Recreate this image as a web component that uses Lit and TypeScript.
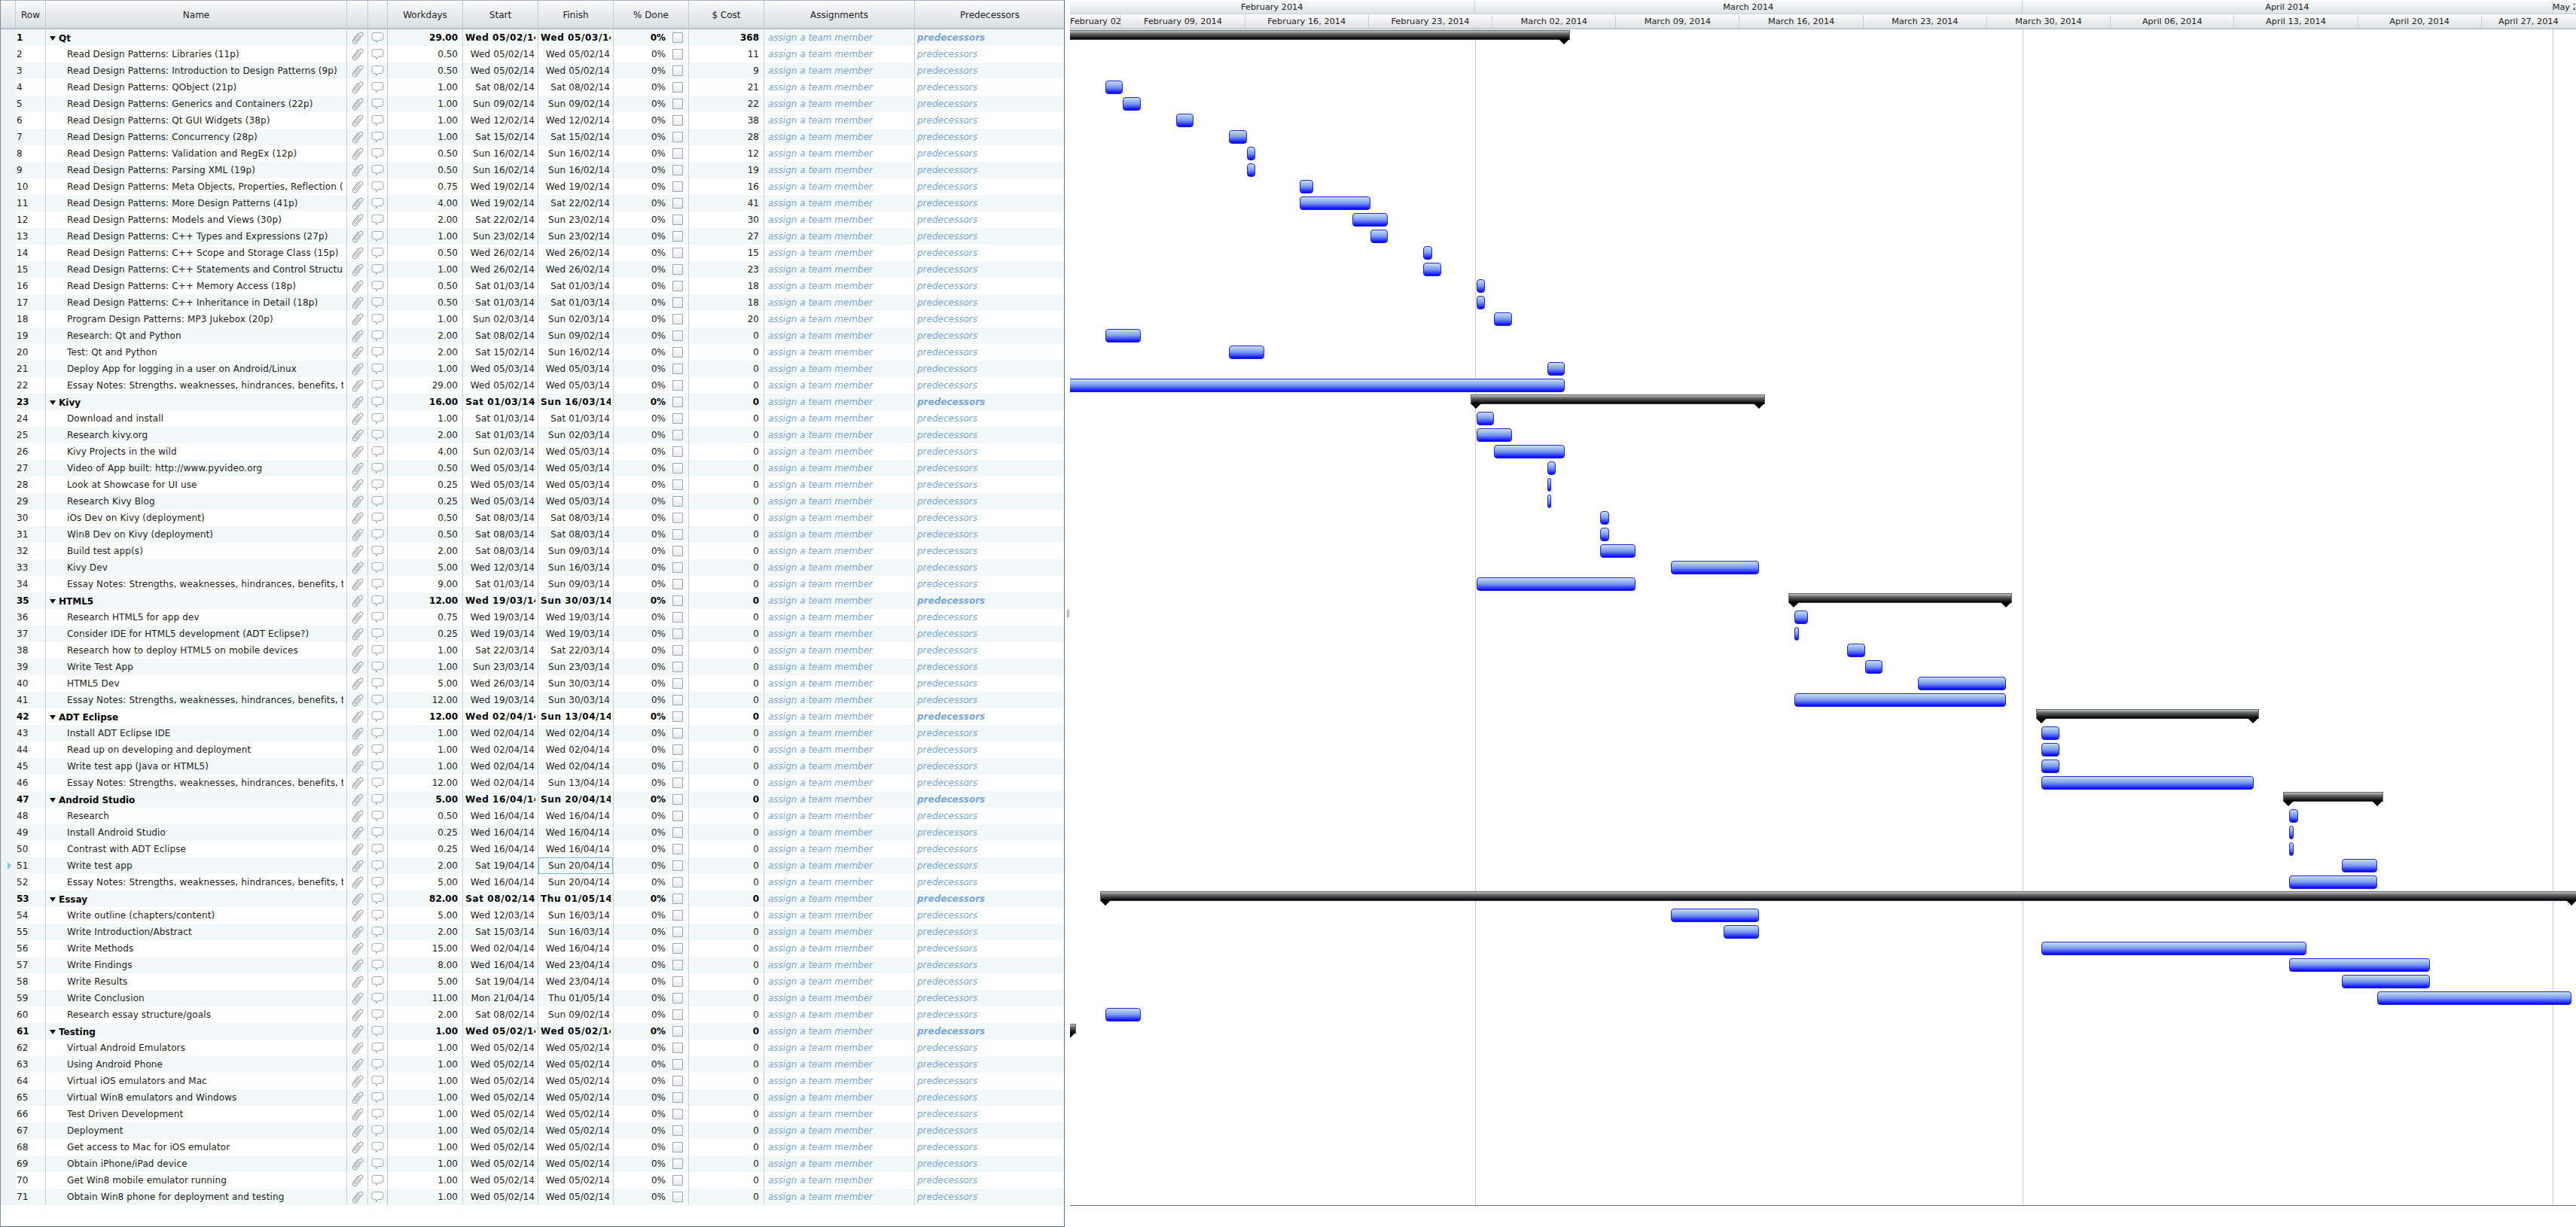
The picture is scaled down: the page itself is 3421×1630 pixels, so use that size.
import { LitElement, html, css, svg } from 'lit';
import { customElement } from 'lit/decorators.js';
import { classMap } from 'lit/directives/class-map.js';

type Task = [name: string, days: number, start: string, finish: string, cost: number, group?: boolean];

const ESSAY = 'Essay Notes: Strengths, weaknesses, hindrances, benefits, threats';
const RDP = 'Read Design Patterns: ';

const TASKS: Task[] = [
  ['Qt', 29, 'Wed 05/02/14', 'Wed 05/03/14', 368, true],
  [RDP + 'Libraries (11p)', 0.5, 'Wed 05/02/14', 'Wed 05/02/14', 11],
  [RDP + 'Introduction to Design Patterns (9p)', 0.5, 'Wed 05/02/14', 'Wed 05/02/14', 9],
  [RDP + 'QObject (21p)', 1, 'Sat 08/02/14', 'Sat 08/02/14', 21],
  [RDP + 'Generics and Containers (22p)', 1, 'Sun 09/02/14', 'Sun 09/02/14', 22],
  [RDP + 'Qt GUI Widgets (38p)', 1, 'Wed 12/02/14', 'Wed 12/02/14', 38],
  [RDP + 'Concurrency (28p)', 1, 'Sat 15/02/14', 'Sat 15/02/14', 28],
  [RDP + 'Validation and RegEx (12p)', 0.5, 'Sun 16/02/14', 'Sun 16/02/14', 12],
  [RDP + 'Parsing XML (19p)', 0.5, 'Sun 16/02/14', 'Sun 16/02/14', 19],
  [RDP + 'Meta Objects, Properties, Reflection (16p)', 0.75, 'Wed 19/02/14', 'Wed 19/02/14', 16],
  [RDP + 'More Design Patterns (41p)', 4, 'Wed 19/02/14', 'Sat 22/02/14', 41],
  [RDP + 'Models and Views (30p)', 2, 'Sat 22/02/14', 'Sun 23/02/14', 30],
  [RDP + 'C++ Types and Expressions (27p)', 1, 'Sun 23/02/14', 'Sun 23/02/14', 27],
  [RDP + 'C++ Scope and Storage Class (15p)', 0.5, 'Wed 26/02/14', 'Wed 26/02/14', 15],
  [RDP + 'C++ Statements and Control Structures (23p)', 1, 'Wed 26/02/14', 'Wed 26/02/14', 23],
  [RDP + 'C++ Memory Access (18p)', 0.5, 'Sat 01/03/14', 'Sat 01/03/14', 18],
  [RDP + 'C++ Inheritance in Detail (18p)', 0.5, 'Sat 01/03/14', 'Sat 01/03/14', 18],
  ['Program Design Patterns: MP3 Jukebox (20p)', 1, 'Sun 02/03/14', 'Sun 02/03/14', 20],
  ['Research: Qt and Python', 2, 'Sat 08/02/14', 'Sun 09/02/14', 0],
  ['Test: Qt and Python', 2, 'Sat 15/02/14', 'Sun 16/02/14', 0],
  ['Deploy App for logging in a user on Android/Linux', 1, 'Wed 05/03/14', 'Wed 05/03/14', 0],
  [ESSAY, 29, 'Wed 05/02/14', 'Wed 05/03/14', 0],
  ['Kivy', 16, 'Sat 01/03/14', 'Sun 16/03/14', 0, true],
  ['Download and install', 1, 'Sat 01/03/14', 'Sat 01/03/14', 0],
  ['Research kivy.org', 2, 'Sat 01/03/14', 'Sun 02/03/14', 0],
  ['Kivy Projects in the wild', 4, 'Sun 02/03/14', 'Wed 05/03/14', 0],
  ['Video of App built: http://www.pyvideo.org', 0.5, 'Wed 05/03/14', 'Wed 05/03/14', 0],
  ['Look at Showcase for UI use', 0.25, 'Wed 05/03/14', 'Wed 05/03/14', 0],
  ['Research Kivy Blog', 0.25, 'Wed 05/03/14', 'Wed 05/03/14', 0],
  ['iOs Dev on Kivy (deployment)', 0.5, 'Sat 08/03/14', 'Sat 08/03/14', 0],
  ['Win8 Dev on Kivy (deployment)', 0.5, 'Sat 08/03/14', 'Sat 08/03/14', 0],
  ['Build test app(s)', 2, 'Sat 08/03/14', 'Sun 09/03/14', 0],
  ['Kivy Dev', 5, 'Wed 12/03/14', 'Sun 16/03/14', 0],
  [ESSAY, 9, 'Sat 01/03/14', 'Sun 09/03/14', 0],
  ['HTML5', 12, 'Wed 19/03/14', 'Sun 30/03/14', 0, true],
  ['Research HTML5 for app dev', 0.75, 'Wed 19/03/14', 'Wed 19/03/14', 0],
  ['Consider IDE for HTML5 development (ADT Eclipse?)', 0.25, 'Wed 19/03/14', 'Wed 19/03/14', 0],
  ['Research how to deploy HTML5 on mobile devices', 1, 'Sat 22/03/14', 'Sat 22/03/14', 0],
  ['Write Test App', 1, 'Sun 23/03/14', 'Sun 23/03/14', 0],
  ['HTML5 Dev', 5, 'Wed 26/03/14', 'Sun 30/03/14', 0],
  [ESSAY, 12, 'Wed 19/03/14', 'Sun 30/03/14', 0],
  ['ADT Eclipse', 12, 'Wed 02/04/14', 'Sun 13/04/14', 0, true],
  ['Install ADT Eclipse IDE', 1, 'Wed 02/04/14', 'Wed 02/04/14', 0],
  ['Read up on developing and deployment', 1, 'Wed 02/04/14', 'Wed 02/04/14', 0],
  ['Write test app (Java or HTML5)', 1, 'Wed 02/04/14', 'Wed 02/04/14', 0],
  [ESSAY, 12, 'Wed 02/04/14', 'Sun 13/04/14', 0],
  ['Android Studio', 5, 'Wed 16/04/14', 'Sun 20/04/14', 0, true],
  ['Research', 0.5, 'Wed 16/04/14', 'Wed 16/04/14', 0],
  ['Install Android Studio', 0.25, 'Wed 16/04/14', 'Wed 16/04/14', 0],
  ['Contrast with ADT Eclipse', 0.25, 'Wed 16/04/14', 'Wed 16/04/14', 0],
  ['Write test app', 2, 'Sat 19/04/14', 'Sun 20/04/14', 0],
  [ESSAY, 5, 'Wed 16/04/14', 'Sun 20/04/14', 0],
  ['Essay', 82, 'Sat 08/02/14', 'Thu 01/05/14', 0, true],
  ['Write outline (chapters/content)', 5, 'Wed 12/03/14', 'Sun 16/03/14', 0],
  ['Write Introduction/Abstract', 2, 'Sat 15/03/14', 'Sun 16/03/14', 0],
  ['Write Methods', 15, 'Wed 02/04/14', 'Wed 16/04/14', 0],
  ['Write Findings', 8, 'Wed 16/04/14', 'Wed 23/04/14', 0],
  ['Write Results', 5, 'Sat 19/04/14', 'Wed 23/04/14', 0],
  ['Write Conclusion', 11, 'Mon 21/04/14', 'Thu 01/05/14', 0],
  ['Research essay structure/goals', 2, 'Sat 08/02/14', 'Sun 09/02/14', 0],
  ['Testing', 1, 'Wed 05/02/14', 'Wed 05/02/14', 0, true],
  ['Virtual Android Emulators', 1, 'Wed 05/02/14', 'Wed 05/02/14', 0],
  ['Using Android Phone', 1, 'Wed 05/02/14', 'Wed 05/02/14', 0],
  ['Virtual iOS emulators and Mac', 1, 'Wed 05/02/14', 'Wed 05/02/14', 0],
  ['Virtual Win8 emulators and Windows', 1, 'Wed 05/02/14', 'Wed 05/02/14', 0],
  ['Test Driven Development', 1, 'Wed 05/02/14', 'Wed 05/02/14', 0],
  ['Deployment', 1, 'Wed 05/02/14', 'Wed 05/02/14', 0],
  ['Get access to Mac for iOS emulator', 1, 'Wed 05/02/14', 'Wed 05/02/14', 0],
  ['Obtain iPhone/iPad device', 1, 'Wed 05/02/14', 'Wed 05/02/14', 0],
  ['Get Win8 mobile emulator running', 1, 'Wed 05/02/14', 'Wed 05/02/14', 0],
  ['Obtain Win8 phone for deployment and testing', 1, 'Wed 05/02/14', 'Wed 05/02/14', 0],
];

// timeline scale, measured from the chart: px per day and where 8 Feb falls
const DAY = 23.46;
const GANTT_X = 1422;
const GANTT_END = 3421;
const FEB8_X = 1469;
const FEB9_TICK = 1490.4;
const CUM_DAYS: Record<string, number> = { '02': 0, '03': 28, '04': 59, '05': 89 };

const dayOffset = (date: string) => {
  const [d, m] = date.slice(4).split('/');
  return CUM_DAYS[m] + Number(d) - 8;
};
const barX = (day: number) => FEB8_X + day * DAY - GANTT_X;

const tick = (daysFromFeb9: number) => FEB9_TICK + daysFromFeb9 * DAY - GANTT_X;

const MONTHS: [string, number, number][] = [
  ['February 2014', 0, tick(20)],
  ['March 2014', tick(20), tick(51)],
  ['April 2014', tick(51), tick(81)],
  ['May 2014', tick(81), GANTT_END - GANTT_X],
];

const WEEK_LABELS = [
  'February 02, 2014', 'February 09, 2014', 'February 16, 2014', 'February 23, 2014',
  'March 02, 2014', 'March 09, 2014', 'March 16, 2014', 'March 23, 2014', 'March 30, 2014',
  'April 06, 2014', 'April 13, 2014', 'April 20, 2014', 'April 27, 2014',
];

const clipIcon = svg`<svg class="icon" width="20" height="20" viewBox="0 0 20 20" fill="none">
  <g transform="rotate(38 10 10)" stroke-linecap="round">
    <path d="M7 5v11a3 3 0 0 0 6 0V3.500a2.200 2.200 0 0 0-4.400 0V14.500a1.300 1.300 0 0 0 2.600 0V6" stroke="#a3a7aa" stroke-width="1.100"/>
  </g>
</svg>`;

const noteIcon = svg`<svg class="icon" width="17" height="17" viewBox="0 0 17 17" fill="none">
  <path d="M3.500 1.500h10a2.500 2.500 0 0 1 2.500 2.500v5a2.500 2.500 0 0 1-2.500 2.500H8.500L6.500 15v-3.500h-3A2.500 2.500 0 0 1 1 9V4a2.500 2.500 0 0 1 2.500-2.500z" fill="#fff" stroke="#a6aaad"/>
  <path d="M14.500 5v4a1.200 1.200 0 0 1-1.200 1.200H7.500c4 0 6.500-1.500 7-5.200z" fill="#e2e4e5"/>
</svg>`;

@customElement('app-root')
export class AppRoot extends LitElement {
  static styles = css`
    :host {
      display: flex;
      width: 3421px;
      height: 1630px;
      overflow: hidden;
      background: #fff;
      font-family: "DejaVu Sans", Verdana, sans-serif;
      font-size: 12px;
      color: #1c1c1c;
    }

    /* left table */
    .grid {
      box-sizing: border-box;
      width: 1414px;
      height: 1630px;
      flex: none;
      border-left: 1px solid #7d8e9b;
      border-right: 1px solid #5f7482;
      border-bottom: 1px solid #5f7482;
    }

    .grid-head {
      display: flex;
      box-sizing: border-box;
      height: 39px;
      padding-top: 0;
      border-top: 1px solid #a5b4c4;
      border-bottom: 2px solid #b4c0c9;
      background: linear-gradient(#f9fafa, #d9dfe3);
    }

    .grid-head .cell {
      justify-content: center;
      padding: 1px 0 0;
      letter-spacing: 0;
      border-right-color: #c3cacf;
    }

    .row {
      display: flex;
      height: 22px;
    }

    .row.odd {
      background: #f3f8f9;
    }

    .row.group {
      font-weight: bold;
      color: #000;
    }

    .cell {
      display: flex;
      align-items: center;
      box-sizing: border-box;
      flex: none;
      height: 100%;
      min-width: 0;
      border-right: 1px solid #c9d1d6;
    }

    .t {
      flex: 1;
      min-width: 0;
      overflow: hidden;
      white-space: nowrap;
    }

    .gutter { width: 20px; padding-left: 9px; background: #edf3f7; border-right: 0; }
    .grid-head .gutter { background: none; border-right: 1px solid #c3cacf; }
    .c-row { width: 40px; padding-left: 1px; }
    .c-name { width: 400px; padding: 0 4px 0 28px; letter-spacing: 0.12px; }
    .group .c-name { padding-left: 5px; letter-spacing: 0; }
    .c-clip { width: 28px; justify-content: center; }
    .c-note { width: 26px; justify-content: center; border-right-color: #b9c2c8; }
    .c-num { width: 100px; padding: 0 6px 0 3px; text-align: right; }
    .c-date { width: 100px; padding: 0 4px 0 3px; text-align: right; letter-spacing: 0.12px; }
    /* bold dates run wider than the cell and get cut, as in the original */
    .group .c-date { padding-right: 3px; letter-spacing: 0.6px; }
    .c-done { width: 100px; padding-right: 7px; text-align: right; gap: 9px; }
    .c-assign { width: 200px; padding-left: 5px; }
    .c-pred { width: 199px; padding-left: 3px; border-right: 0; }
    .link { color: #78a7d6; font-style: italic; }
    .assign-text { font-weight: normal; }

    .selected {
      box-shadow: inset 0 0 0 1px #7dbaca;
    }

    .marker {
      width: 0;
      height: 0;
      border-left: 5px solid #7fc7e6;
      border-top: 5px solid transparent;
      border-bottom: 5px solid transparent;
    }

    .twist {
      flex: none;
      width: 0;
      height: 0;
      margin: 1px 4px 0 0;
      border-top: 6px solid #111;
      border-left: 4.500px solid transparent;
      border-right: 4.500px solid transparent;
    }

    .group-name { padding-top: 1px; }

    .check {
      flex: none;
      box-sizing: border-box;
      width: 14px;
      height: 14px;
      border: 1px solid #9ba7ad;
      border-radius: 1px;
      background: linear-gradient(#fff, #e6eaec);
    }

    .icon { display: block; }

    /* splitter */
    .splitter {
      display: flex;
      align-items: center;
      justify-content: flex-end;
      gap: 1px;
      box-sizing: border-box;
      width: 7px;
      flex: none;
      height: 1630px;
      padding-right: 1px;
    }

    .grip {
      width: 1px;
      height: 10px;
      background: #8d9499;
    }

    /* chart */
    .gantt {
      flex: 1;
      min-width: 0;
      overflow: hidden;
    }

    .time-head {
      box-sizing: border-box;
      height: 39px;
      padding-top: 1px;
      font-size: 11.3px;
      border-bottom: 2px solid #b4c0c9;
    }

    .scale {
      display: flex;
      height: 17px;
      margin-bottom: 1px;
      background: linear-gradient(#fafbfb, #dde2e5);
      border-bottom: 1px solid #c9d0d4;
    }

    .scale-cell {
      box-sizing: border-box;
      flex: none;
      height: 100%;
      overflow: hidden;
      line-height: 17px;
      text-align: center;
      white-space: nowrap;
      border-right: 1px solid #c9d0d4;
    }

    .scale-cell:last-child { border-right: 0; }

    .chart {
      position: relative;
      box-sizing: border-box;
      height: 1563px;
      border-left: 1px solid #5f7482;
      border-bottom: 1px solid #5f7482;
      margin-left: -1px;
      overflow: hidden;
    }

    .chart-row {
      position: relative;
      height: 22px;
    }

    .month-line {
      position: absolute;
      top: 0;
      bottom: 0;
      width: 1px;
      background: #c6cacc;
    }

    .bar {
      position: absolute;
      top: 2px;
      height: 18px;
      box-sizing: border-box;
      border: 1px solid #2323e6;
      border-radius: 4px;
      background: linear-gradient(#c8e0ec, #7898ee 50%, #0000ff);
    }

    .summary {
      position: absolute;
      top: 1px;
      height: 13px;
      box-sizing: border-box;
      border: 1px solid #5b686f;
      border-bottom-color: #3a4248;
      background: linear-gradient(#c4c4c4, #666 35%, #000);
    }

    .tip {
      position: absolute;
      top: 13px;
      width: 0;
      height: 0;
      border-top: 7px solid #000;
      border-left: 7.500px solid transparent;
      border-right: 7.500px solid transparent;
    }
  `;

  private renderRow(task: Task, i: number) {
    const [name, days, start, finish, cost, group] = task;
    const rowClasses = { row: true, odd: i % 2 === 0, group: !!group };
    return html`
      <div class=${classMap(rowClasses)}>
        <div class="cell gutter">${i === 50 ? html`<div class="marker"></div>` : ''}</div>
        <div class="cell c-row"><div class="t">${i + 1}</div></div>
        <div class="cell c-name">
          ${group ? html`<span class="twist"></span>` : ''}
          <div class="t ${group ? 'group-name' : ''}">${name}</div>
        </div>
        <div class="cell c-clip">${clipIcon}</div>
        <div class="cell c-note">${noteIcon}</div>
        <div class="cell c-num"><div class="t">${days.toFixed(2)}</div></div>
        <div class="cell c-date"><div class="t">${start}</div></div>
        <div class="cell c-date ${i === 50 ? 'selected' : ''}"><div class="t">${finish}</div></div>
        <div class="cell c-done"><div class="t">0%</div><span class="check"></span></div>
        <div class="cell c-num"><div class="t">${cost}</div></div>
        <div class="cell c-assign"><div class="t link assign-text">assign a team member</div></div>
        <div class="cell c-pred"><div class="t link">predecessors</div></div>
      </div>
    `;
  }

  private renderBar(task: Task) {
    const [, days, start, finish, , group] = task;
    const from = dayOffset(start);
    if (!group) {
      const left = barX(from);
      return html`<div class="bar" style="left:${left}px;width:${days * DAY}px"></div>`;
    }
    // summary bars stick out past their tasks and carry a tip at each end
    const left = barX(from) - 7.5;
    const right = barX(dayOffset(finish) + 1) + 7.5;
    return html`
      <div class="summary" style="left:${left}px;width:${right - left}px"></div>
      <div class="tip" style="left:${left}px"></div>
      <div class="tip" style="left:${right - 15}px"></div>
    `;
  }

  render() {
    const weekCells = WEEK_LABELS.map((label, k) => {
      const from = k === 0 ? 0 : tick((k - 1) * 7);
      const to = k === WEEK_LABELS.length - 1 ? GANTT_END - GANTT_X : tick(k * 7);
      return html`<div class="scale-cell" style="width:${to - from}px">${label}</div>`;
    });

    return html`
      <div class="grid">
        <div class="grid-head">
          <div class="cell gutter"></div>
          <div class="cell c-row">Row</div>
          <div class="cell c-name">Name</div>
          <div class="cell c-clip"></div>
          <div class="cell c-note"></div>
          <div class="cell c-num">Workdays</div>
          <div class="cell c-date">Start</div>
          <div class="cell c-date">Finish</div>
          <div class="cell c-done">% Done</div>
          <div class="cell c-num">$ Cost</div>
          <div class="cell c-assign">Assignments</div>
          <div class="cell c-pred">Predecessors</div>
        </div>
        ${TASKS.map((t, i) => this.renderRow(t, i))}
      </div>
      <div class="splitter"><span class="grip"></span><span class="grip"></span></div>
      <div class="gantt">
        <div class="time-head">
          <div class="scale">
            ${MONTHS.map(([label, from, to]) => html`<div class="scale-cell" style="width:${to - from}px">${label}</div>`)}
          </div>
          <div class="scale">${weekCells}</div>
        </div>
        <div class="chart">
          ${MONTHS.slice(1).map(([, from]) => html`<div class="month-line" style="left:${from}px"></div>`)}
          ${TASKS.map((t) => html`<div class="chart-row">${this.renderBar(t)}</div>`)}
        </div>
      </div>
    `;
  }
}

declare global {
  interface HTMLElementTagNameMap {
    'app-root': AppRoot;
  }
}
